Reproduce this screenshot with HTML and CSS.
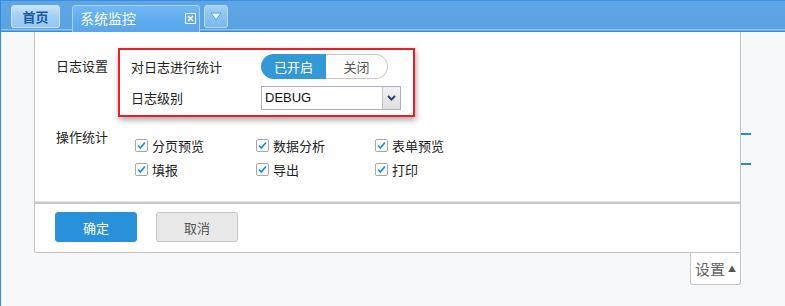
FILE: index.html
```html
<!DOCTYPE html>
<html lang="zh">
<head>
<meta charset="utf-8">
<title>系统监控</title>
<link rel="stylesheet" href="styles.css">
</head>
<body>
<div class="page">
  <header class="topbar">
    <div class="tabs">
      <div class="tab tab-home">首页</div>
      <div class="tab tab-active">
        <span>系统监控</span>
        <svg class="tab-close" width="11" height="11" viewBox="0 0 11 11"><rect x="0.5" y="0.5" width="10" height="10" fill="none" stroke="#fff" stroke-width="1"/><path d="M3 3 L8 8 M8 3 L3 8" stroke="#fff" stroke-width="1.6"/></svg>
      </div>
      <div class="tab-menu">
        <svg width="12" height="9" viewBox="0 0 12 9"><path d="M1 1 H11 L6 8 Z" fill="#e9f6ff" stroke="#4a9fe0" stroke-width="1"/></svg>
      </div>
    </div>
  </header>
  <div class="header-rule"></div>

  <main class="main">
    <section class="panel">
      <div class="panel-body">
        <div class="form-row">
          <div class="row-label row-label-log">日志设置</div>
          <div class="highlight-box">
            <div class="field field-toggle">
              <div class="field-label">对日志进行统计</div>
              <div class="toggle">
                <span class="toggle-on">已开启</span>
                <span class="toggle-off">关闭</span>
              </div>
            </div>
            <div class="field field-select">
              <div class="field-label">日志级别</div>
              <div class="select">
                <span class="select-value">DEBUG</span>
                <span class="select-arrow">
                  <svg width="9" height="6" viewBox="0 0 9 6"><path d="M1 1 L4.5 4.5 L8 1" fill="none" stroke="#2d3f78" stroke-width="2"/></svg>
                </span>
              </div>
            </div>
          </div>
        </div>

        <div class="form-row form-row-ops">
          <div class="row-label row-label-ops">操作统计</div>
          <div class="checks">
            <label class="check"><span class="box"><svg width="13" height="13" viewBox="0 0 13 13"><rect x="0.5" y="0.5" width="12" height="12" rx="1.5" fill="#fff" stroke="#a8a8a8"/><path d="M3 6.5 L5.3 9 L10 3.5" fill="none" stroke="#1b8ee6" stroke-width="1.8"/></svg></span>分页预览</label>
            <label class="check"><span class="box"><svg width="13" height="13" viewBox="0 0 13 13"><rect x="0.5" y="0.5" width="12" height="12" rx="1.5" fill="#fff" stroke="#a8a8a8"/><path d="M3 6.5 L5.3 9 L10 3.5" fill="none" stroke="#1b8ee6" stroke-width="1.8"/></svg></span>数据分析</label>
            <label class="check"><span class="box"><svg width="13" height="13" viewBox="0 0 13 13"><rect x="0.5" y="0.5" width="12" height="12" rx="1.5" fill="#fff" stroke="#a8a8a8"/><path d="M3 6.5 L5.3 9 L10 3.5" fill="none" stroke="#1b8ee6" stroke-width="1.8"/></svg></span>表单预览</label>
            <label class="check"><span class="box"><svg width="13" height="13" viewBox="0 0 13 13"><rect x="0.5" y="0.5" width="12" height="12" rx="1.5" fill="#fff" stroke="#a8a8a8"/><path d="M3 6.5 L5.3 9 L10 3.5" fill="none" stroke="#1b8ee6" stroke-width="1.8"/></svg></span>填报</label>
            <label class="check"><span class="box"><svg width="13" height="13" viewBox="0 0 13 13"><rect x="0.5" y="0.5" width="12" height="12" rx="1.5" fill="#fff" stroke="#a8a8a8"/><path d="M3 6.5 L5.3 9 L10 3.5" fill="none" stroke="#1b8ee6" stroke-width="1.8"/></svg></span>导出</label>
            <label class="check"><span class="box"><svg width="13" height="13" viewBox="0 0 13 13"><rect x="0.5" y="0.5" width="12" height="12" rx="1.5" fill="#fff" stroke="#a8a8a8"/><path d="M3 6.5 L5.3 9 L10 3.5" fill="none" stroke="#1b8ee6" stroke-width="1.8"/></svg></span>打印</label>
          </div>
        </div>
      </div>

      <div class="panel-footer">
        <button class="btn btn-primary">确定</button>
        <button class="btn btn-default">取消</button>
      </div>

      <span class="marker marker-1"></span>
      <span class="marker marker-2"></span>
    </section>
    <div class="settings-tab-row">
      <div class="settings-tab">设置<span class="caret">▲</span></div>
    </div>
  </main>
</div>
</body>
</html>
```

FILE: styles.css
```css
* { box-sizing: border-box; }

html, body {
  margin: 0;
  padding: 0;
  height: 100%;
}

body {
  background: #f7f8fa;
  font-family: "Noto Sans CJK SC", "Noto Sans", sans-serif;
  font-size: 13px;
  color: #222;
}

.page {
  min-height: 306px;
  border-left: 1px solid #2f8de4;
}

/* ---------- top bar ---------- */
.topbar {
  height: 29px;
  background: linear-gradient(#5fa6e6, #5ba2e3);
  border-top: 1px solid #3a8fe2;
  position: relative;
}

.tabs {
  display: flex;
  align-items: flex-start;
  padding: 4px 0 0 10px;
  height: 28px;
}

.tab {
  height: 23px;
  display: flex;
  align-items: center;
  border-radius: 3px;
}

.tab-home {
  width: 49px;
  justify-content: center;
  background: linear-gradient(#c6e3fb, #a4d0f4 45%, #93c6f0);
  border: 1px solid #cfe6fa;
  color: #1b5aa6;
  font-weight: bold;
  font-size: 13px;
}

.tab-active {
  margin-left: 12px;
  width: 128px;
  height: 27px;
  padding: 0 0 2px 7px;
  background: linear-gradient(#72b8f3, #5eaaee 60%, #5aa6ea);
  border: 1px solid #a9d3f6;
  border-bottom: none;
  border-radius: 4px 4px 0 0;
  color: #fff;
  font-size: 14px;
  justify-content: space-between;
  position: relative;
  z-index: 1;
}

.tab-close {
  margin-right: 3px;
}

.tab-menu {
  margin-left: 4px;
  width: 24px;
  height: 23px;
  border-radius: 3px;
  border: 1px solid #b6dbf7;
  background: linear-gradient(#a2d0f4, #8cc3ef 50%, #7ab8ec);
  display: flex;
  align-items: center;
  justify-content: center;
}

.header-rule {
  height: 3px;
  background: linear-gradient(#8fc2ee 0, #8fc2ee 1px, #6fa9df 1px, #6fa9df 2px, #2f8de4 2px);
}

/* ---------- main ---------- */
.main {
  padding-left: 33px;
}

.panel {
  position: relative;
  width: 707px;
  background: #fff;
  border: 1px solid #c2c2c2;
  border-top: none;
  border-radius: 0 0 2px 2px;
}

.panel-body {
  height: 172px;
  padding: 16px 0 0 21px;
  border-bottom: 2px solid #c9c9c9;
  box-shadow: 0 -1px 0 #e6e6e6 inset;
}

.form-row {
  display: flex;
  align-items: flex-start;
}

.row-label {
  width: 62px;
  color: #222;
}

.row-label-log {
  padding-top: 8px;
}

.highlight-box {
  width: 297px;
  height: 69px;
  border: 2px solid #ee1c24;
  box-shadow: 1px 3px 6px rgba(0, 0, 0, 0.35);
  padding: 0 0 0 11px;
}

.field {
  display: flex;
  align-items: center;
}

.field-toggle { height: 30px; padding-top: 2px; }
.field-select { height: 33px; padding-top: 2px; }

.field-label {
  width: 130px;
}

.toggle {
  display: flex;
  height: 25px;
  width: 127px;
}

.toggle span {
  display: flex;
  align-items: center;
  justify-content: center;
  font-size: 13px;
}

.toggle-on {
  width: 65px;
  background: #3398d6;
  color: #fff;
  border-radius: 13px 0 0 13px;
}

.toggle-off {
  flex: 1;
  color: #555;
  border: 1px solid #c8c8c8;
  border-left: none;
  border-radius: 0 13px 13px 0;
}

.select {
  display: flex;
  width: 140px;
  height: 24px;
  border: 1px solid #adb2c8;
}

.select-value {
  flex: 1;
  padding-left: 3px;
  display: flex;
  align-items: center;
  font-family: "Liberation Sans", "DejaVu Sans", sans-serif;
  font-size: 13px;
  color: #111;
}

.select-arrow {
  width: 18px;
  border-left: 1px solid #c4c4c4;
  background: linear-gradient(#f3f3f3, #dedede);
  display: flex;
  align-items: center;
  justify-content: center;
}

.form-row-ops {
  margin-top: 10px;
}

.row-label-ops {
  padding-top: 0;
}

.checks {
  display: grid;
  grid-template-columns: 121px 119px 100px;
  grid-auto-rows: 24px;
  margin: 6px 0 0 17px;
}

.check {
  display: flex;
  align-items: center;
  color: #222;
}

.box {
  width: 13px;
  height: 13px;
  margin-right: 4px;
  display: flex;
}

/* ---------- footer ---------- */
.panel-footer {
  height: 48px;
  display: flex;
  align-items: flex-start;
  padding: 8px 0 0 20px;
  gap: 19px;
}

.btn {
  height: 30px;
  width: 82px;
  border-radius: 3px;
  font-family: "Noto Sans CJK SC", sans-serif;
  font-size: 13px;
  padding: 0;
}

.btn-primary {
  background: #2991d9;
  border: 1px solid #2991d9;
  color: #fff;
}

.btn-default {
  background: #e8e8e8;
  border: 1px solid #c8c8c8;
  color: #555;
}

.marker {
  position: absolute;
  left: 706px;
  width: 10px;
  height: 2px;
  background: #2a8ad6;
}

.marker-1 { top: 101px; }
.marker-2 { top: 131px; }

.settings-tab-row {
  width: 707px;
  display: flex;
  justify-content: flex-end;
}

.settings-tab {
  width: 51px;
  height: 33px;
  margin-top: -1px;
  background: #fff;
  border: 1px solid #c4c4c4;
  border-top: none;
  border-radius: 0 0 3px 3px;
  display: flex;
  align-items: center;
  justify-content: center;
  padding-top: 1px;
  color: #666;
  font-size: 15px;
}

.caret {
  font-size: 8px;
  margin-left: 3px;
  color: #555;
}
```
